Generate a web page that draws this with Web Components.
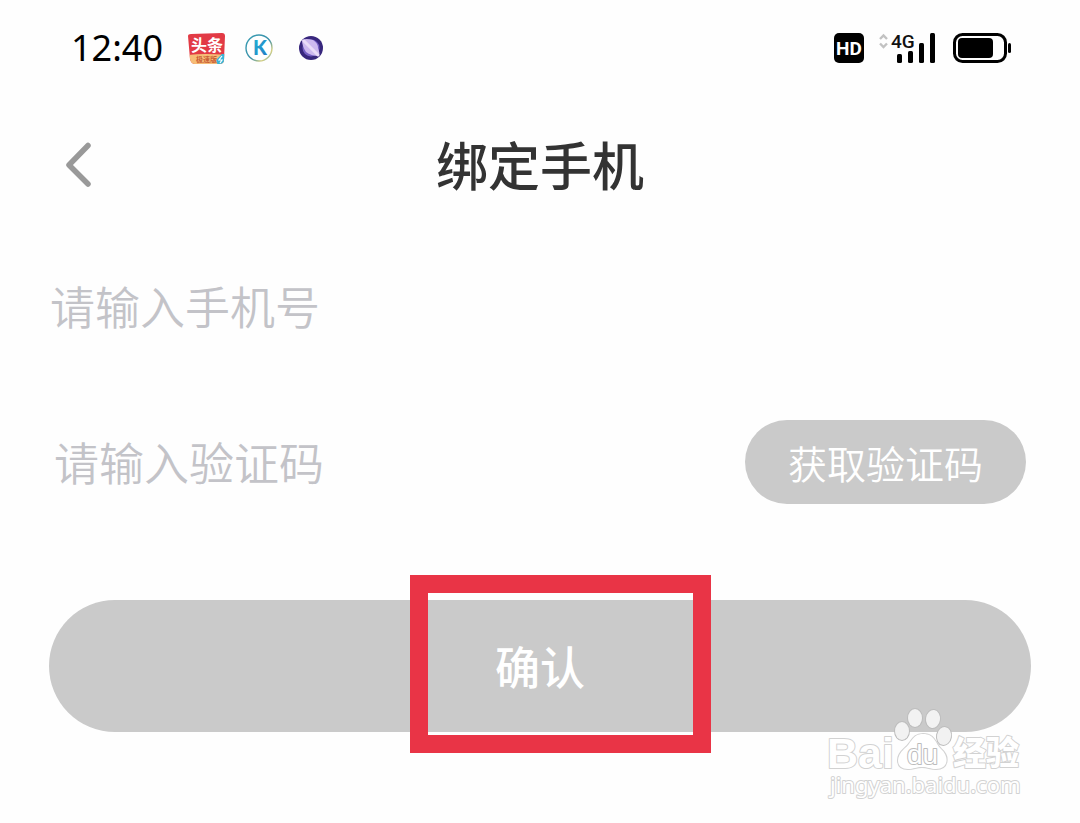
<!DOCTYPE html>
<html lang="zh-CN">
<head>
<meta charset="utf-8">
<meta name="viewport" content="width=device-width, initial-scale=1">
<title>绑定手机</title>
<style>
  body { margin: 0; background: #fefefe; font-family: "Noto Sans", "Noto Sans CJK SC", sans-serif; }
</style>
</head>
<body>
<bind-phone-page></bind-phone-page>
<script>
const define = (name, html) => {
  const template = document.createElement("template");
  template.innerHTML = html;
  customElements.define(name, class extends HTMLElement {
    constructor() {
      super();
      this.attachShadow({ mode: "open" }).append(template.content.cloneNode(true));
    }
  });
};

define("status-bar", `
  <style>
    :host { display: flex; align-items: center; justify-content: space-between; height: 96px; padding: 0 68px 0 71px; box-sizing: border-box; }
    .group { display: flex; align-items: center; }
    time { font: 400 36px/48px "Noto Sans", sans-serif; color: #000; margin-right: 24px; }
    svg { display: block; overflow: visible; }
  </style>
  <div class="group">
    <time>12:40</time>
    <svg width="140" height="36" viewBox="0 0 140 36" role="img" aria-label="通知">
      <defs>
        <linearGradient id="ring" x1="0" y1="0" x2="1" y2="1"><stop offset="0" stop-color="#3a9fb5"/><stop offset=".55" stop-color="#3a8fa8"/><stop offset=".8" stop-color="#d8d080"/><stop offset="1" stop-color="#4a9cc8"/></linearGradient>
        <linearGradient id="kay" x1="0" y1="0" x2="1" y2="1"><stop offset="0" stop-color="#25b8d4"/><stop offset="1" stop-color="#2377c4"/></linearGradient>
        <clipPath id="tile"><path d="M1 6Q1 4 4 4L35 3Q38 3 38 6L37 30Q37 34 32 34H8Q4 34 3 29Z"/></clipPath>
      </defs>
      <g clip-path="url(#tile)">
        <rect width="40" height="36" fill="#e23a45"/>
        <path d="M0 25Q18 23 40 25V36H0Z" fill="#f6bd77"/>
        <path d="M31 36L29 30L35 24H40V36Z" fill="#38b5d8"/>
        <path d="M35 26L32 30H35L33 33" fill="none" stroke="#fff" stroke-width="1.2"/>
      </g>
      <text x="4" y="21" font-family="Noto Sans CJK SC, sans-serif" font-weight="700" font-size="16" fill="#fff">头条</text>
      <text x="9" y="32" font-family="Noto Sans CJK SC, sans-serif" font-weight="700" font-size="7" fill="#c95e35">极速版</text>
      <circle cx="72" cy="18" r="13" fill="#fff" stroke="url(#ring)" stroke-width="1.4"/>
      <text x="66" y="25" font-family="Lato, sans-serif" font-weight="900" font-size="20" fill="url(#kay)">K</text>
      <circle cx="124" cy="18" r="12" fill="#38277d"/>
      <circle cx="124" cy="18" r="8.5" fill="#7660c4"/>
      <path d="M115 10Q119 8 126 10Q131 13 131 18Q133 23 132 26Q124 26 119 22Q115 16 115 10Z" fill="#cdb9ef"/>
      <path d="M117 11L131 25" stroke="#eadcf8" stroke-width="3" stroke-linecap="round"/>
    </svg>
  </div>
  <svg width="180" height="32" viewBox="0 0 180 32" role="img" aria-label="信号与电量">
    <rect x="2" y="1" width="30" height="30" rx="5" fill="#000"/>
    <text x="17" y="23" text-anchor="middle" font-family="Roboto, sans-serif" font-weight="700" font-size="19" fill="#fff">HD</text>
    <path d="M48 7L51.5 3.500L55 7M48 11.500L51.5 15L55 11.500" fill="none" stroke="#c2c2c2" stroke-width="2.4"/>
    <text x="59" y="16" font-family="Roboto, sans-serif" font-weight="500" font-size="19" fill="#111">4G</text>
    <g fill="#000">
      <rect x="65" y="22" width="5" height="9" rx="1.5"/>
      <rect x="76" y="19" width="5" height="12" rx="1.5"/>
      <rect x="87" y="11" width="5" height="20" rx="1.5"/>
      <rect x="98" y="1" width="5" height="30" rx="1.5"/>
      <rect x="126" y="6" width="35" height="20" rx="4"/>
      <rect x="176" y="11" width="3" height="10" rx="1.5"/>
    </g>
    <rect x="122.5" y="2.5" width="51" height="27" rx="8" fill="none" stroke="#000" stroke-width="3"/>
  </svg>`);

define("nav-header", `
  <style>
    :host { display: grid; grid-template-columns: 56px 1fr 56px; align-items: center; height: 136px; padding: 0 50px; box-sizing: border-box; }
    button { border: 0; background: none; padding: 0; height: 56px; display: grid; place-items: center; }
    h1 { margin: 0; text-align: center; font: 500 52px/76px "Noto Sans CJK SC", sans-serif; color: #333; }
  </style>
  <button type="button" aria-label="返回"><svg width="32" height="48" viewBox="0 0 32 48"><path d="M26 5.500L7 25L26 44" fill="none" stroke="#999" stroke-width="5.5" stroke-linecap="round" stroke-linejoin="round"/></svg></button>
  <h1><slot></slot></h1>`);

define("pill-button", `
  <style>
    :host { display: block; }
    button { display: block; width: 100%; border: 0; padding: 0 43px; border-radius: 66px; background: #cacaca; color: #fff; font: 350 39px/84px "Noto Sans CJK SC", sans-serif; white-space: nowrap; }
    :host([large]) button { font-size: 45px; line-height: 132px; font-weight: 500; }
  </style>
  <button type="button"><slot></slot></button>`);

class TextField extends HTMLElement {
  constructor() {
    super();
    const hint = this.getAttribute("hint");
    this.attachShadow({ mode: "open" }).innerHTML = `
      <style>
        :host { display: flex; align-items: center; height: 84px; }
        input { flex: 1; min-width: 0; border: 0; outline: 0; padding: 0; background: none; height: 68px; font: 350 45px/68px "Noto Sans CJK SC", sans-serif; color: #333; }
        input::placeholder { color: #c3c3c8; opacity: 1; }
      </style>
      <input type="text" inputmode="numeric" placeholder="${hint}" aria-label="${hint}">
      <slot></slot>`;
  }
}
customElements.define("text-field", TextField);

define("focus-frame", `
  <style>
    :host { display: block; position: relative; }
    .frame { position: absolute; top: -25px; bottom: -21px; left: calc(50% - 130px); width: 301px; box-sizing: border-box; border: 18px solid #e93446; pointer-events: none; }
  </style>
  <slot></slot><div class="frame"></div>`);

define("site-watermark", `
  <style>
    :host { display: block; position: absolute; right: 4px; bottom: -73px; pointer-events: none; }
    svg { display: block; overflow: visible; }
    text, path, ellipse { fill: #fff; stroke: #d2d2d2; stroke-width: 2; paint-order: stroke; stroke-linejoin: round; }
    ellipse { fill: #f2f2f2; stroke: #bdbdbd; }
    .brand { font: 700 43px "Liberation Sans", sans-serif; }
    .inner { font: 400 28px "Liberation Sans", sans-serif; stroke: #bcbcbc; }
    .cn { font: 900 33px "Noto Sans CJK SC", sans-serif; }
    .url { font: 400 22px "Noto Sans", sans-serif; }
  </style>
  <svg width="202" height="104" viewBox="0 0 202 104" role="img" aria-label="Baidu 经验">
    <text class="brand" x="2" y="67">Bai</text>
    <path d="M98 33C110 33 110 42 116 48C125 56 123 68 111 68C105 68 103 66 97 66C91 66 89 68 83 68C71 68 70 56 79 48C87 42 87 33 98 33Z"/>
    <ellipse cx="77" cy="30" rx="7" ry="9"/>
    <ellipse cx="90" cy="17" rx="7" ry="9"/>
    <ellipse cx="108" cy="18" rx="7" ry="9" transform="rotate(8 108 18)"/>
    <ellipse cx="119" cy="35" rx="7" ry="9" transform="rotate(10 119 35)"/>
    <text class="inner" x="82" y="63">du</text>
    <text class="cn" x="128" y="64">经验</text>
    <text class="url" x="5" y="92">jingyan.baidu.com</text>
  </svg>`);

define("bind-phone-page", `
  <style>
    :host { display: block; padding-bottom: 91px; }
    main { display: flex; flex-direction: column; }
    .phone { padding: 0 50px; margin-top: 32px; }
    .code { padding: 0 54px; margin-top: 72px; }
    .submit { margin: 96px 49px 0; position: relative; }
  </style>
  <status-bar></status-bar>
  <nav-header>绑定手机</nav-header>
  <main>
    <text-field class="phone" hint="请输入手机号"></text-field>
    <text-field class="code" hint="请输入验证码"><pill-button>获取验证码</pill-button></text-field>
    <div class="submit">
      <focus-frame><pill-button large>确认</pill-button></focus-frame>
      <site-watermark></site-watermark>
    </div>
  </main>`);
</script>
</body>
</html>
